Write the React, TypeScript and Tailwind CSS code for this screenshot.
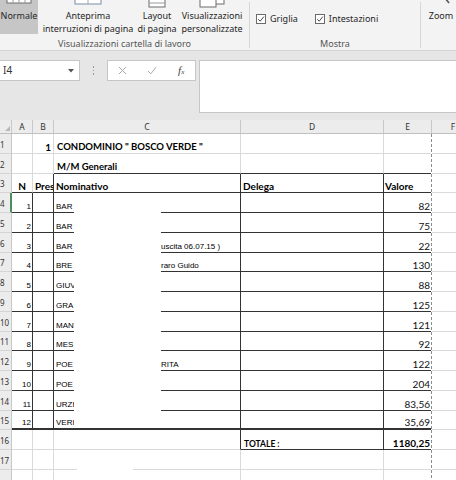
import React from "react";

const RB: Record<string, string> = {
  l: "border-r border-r-[#dadada]",
  d: "border-r border-r-[#333333]",
  n: "",
};
const BB: Record<string, string> = {
  l: "border-b border-b-[#dadada]",
  d: "border-b border-b-[#333333]",
  D: "border-b-2 border-b-[#333333]",
  n: "",
};

function Cell({
  w,
  r = "l",
  b = "l",
  className = "",
  children,
}: {
  w: string;
  r?: string;
  b?: string;
  className?: string;
  children?: React.ReactNode;
}) {
  return (
    <div className={`${w} h-full shrink-0 flex items-end leading-none pb-[1px] overflow-hidden whitespace-nowrap ${RB[r]} ${BB[b]} ${className}`}>
      {children}
    </div>
  );
}

function Sep() {
  return <div className="w-[1px] h-full shrink-0 bg-[repeating-linear-gradient(to_bottom,#8c8c8c_0_3px,transparent_3px_5px)]" />;
}

function RowHead({ n, active = false }: { n?: number; active?: boolean }) {
  return (
    <div
      className={`w-[12px] h-full shrink-0 flex items-end pb-[4px] overflow-hidden bg-[#ececec] border-b border-b-[#d4d4d4] font-['Noto_Sans'] text-[8px] text-[#333] ${
        active ? "border-r-2 border-r-[#4f8f5f]" : "border-r border-r-[#c8c8c8]"
      }`}
    >
      <span className="leading-none">{n}</span>
    </div>
  );
}

const rows = [
  { n: 1, name: "BAR", v: "82" },
  { n: 2, name: "BAR", v: "75" },
  { n: 3, name: "BAR", v: "22", extra: "uscita 06.07.15 )" },
  { n: 4, name: "BRE", v: "130", extra: "raro Guido" },
  { n: 5, name: "GIUV", v: "88" },
  { n: 6, name: "GRA", v: "125" },
  { n: 7, name: "MANV", v: "121" },
  { n: 8, name: "MES", v: "92" },
  { n: 9, name: "POE", v: "122", extra: "RITA" },
  { n: 10, name: "POE", v: "204" },
  { n: 11, name: "URZI", v: "83,56" },
  { n: 12, name: "VERI", v: "35,69" },
];

function Ribbon() {
  return (
    <div className="flex h-[51px] shrink-0 bg-[#f3f3f3] border-b border-b-[#d4d4d4] font-['Noto_Sans'] text-[9px] text-[#262626] overflow-hidden">
      <div className="flex flex-col w-[249px] shrink-0">
        <div className="flex h-[37px] shrink-0">
          <div className="w-[38px] h-[34px] bg-[#c6c6c6] flex flex-col items-center">
            <svg width="26" height="8.5" viewBox="0 0 26 8.5" className="shrink-0">
              <rect x="1" y="-3" width="24" height="6" fill="#ffffff" stroke="#6d6d6d" strokeWidth="1" />
              <line x1="7" y1="0" x2="7" y2="3" stroke="#9a9a9a" />
              <line x1="13" y1="0" x2="13" y2="3" stroke="#9a9a9a" />
              <line x1="19" y1="0" x2="19" y2="3" stroke="#9a9a9a" />
            </svg>
            <span className="leading-[13px]">Normale</span>
          </div>
          <div className="w-[2px]" />
          <div className="w-[96px] flex flex-col items-center">
            <svg width="28" height="8.5" viewBox="0 0 28 8.5" className="shrink-0">
              <rect x="1" y="-3" width="26" height="7" fill="#ffffff" stroke="#7a8ea8" strokeWidth="1" />
              <line x1="14" y1="-3" x2="14" y2="4" stroke="#9aaac0" />
            </svg>
            <span className="leading-[13px]">Anteprima</span>
            <span className="leading-[13px] whitespace-nowrap">interruzioni di pagina</span>
          </div>
          <div className="w-[42px] flex flex-col items-center">
            <svg width="18" height="8.5" viewBox="0 0 18 8.5" className="shrink-0">
              <rect x="1" y="-3" width="16" height="10" fill="#ffffff" stroke="#6d6d6d" strokeWidth="1" />
              <line x1="1" y1="3" x2="17" y2="3" stroke="#9a9a9a" />
            </svg>
            <span className="leading-[13px]">Layout</span>
            <span className="leading-[13px] whitespace-nowrap">di pagina</span>
          </div>
          <div className="w-[68px] flex flex-col items-center">
            <svg width="28" height="8.5" viewBox="0 0 28 8.5" className="shrink-0">
              <rect x="8" y="-3" width="18" height="7" fill="#ffffff" stroke="#6d6d6d" strokeWidth="1" />
              <rect x="2" y="-1" width="16" height="8" fill="#ffffff" stroke="#6d6d6d" strokeWidth="1" />
            </svg>
            <span className="leading-[13px]">Visualizzazioni</span>
            <span className="leading-[13px]">personalizzate</span>
          </div>
        </div>
        <div className="h-[13px] shrink-0 leading-[13px] text-center text-[#555] whitespace-nowrap">Visualizzazioni cartella di lavoro</div>
      </div>
      <div className="w-[1px] bg-[#d6d6d6] my-[2px] shrink-0" />
      <div className="flex flex-col w-[170px] shrink-0">
        <div className="h-[37px] shrink-0 flex items-start pt-[13px] pl-[6px]">
          <div className="flex items-center">
            <div className="w-[10px] h-[10px] border border-[#6b6b6b] bg-white flex items-center justify-center">
              <svg width="8" height="8" viewBox="0 0 8 8">
                <path d="M1.2 4.2 L3.2 6.2 L6.9 1.6" fill="none" stroke="#333" strokeWidth="0.9" />
              </svg>
            </div>
            <span className="ml-[4px] leading-[12px]">Griglia</span>
          </div>
          <div className="flex items-center ml-[17px]">
            <div className="w-[10px] h-[10px] border border-[#6b6b6b] bg-white flex items-center justify-center">
              <svg width="8" height="8" viewBox="0 0 8 8">
                <path d="M1.2 4.2 L3.2 6.2 L6.9 1.6" fill="none" stroke="#333" strokeWidth="0.9" />
              </svg>
            </div>
            <span className="ml-[4px] leading-[12px]">Intestazioni</span>
          </div>
        </div>
        <div className="h-[13px] shrink-0 leading-[13px] text-center text-[#555]">Mostra</div>
      </div>
      <div className="w-[1px] bg-[#d6d6d6] my-[2px] shrink-0" />
      <div className="flex flex-col items-center w-[40px] shrink-0">
        <svg width="20" height="8.5" viewBox="0 0 20 8.5" className="shrink-0">
          <line x1="14" y1="-2" x2="18" y2="3" stroke="#555" strokeWidth="1.6" />
        </svg>
        <span className="leading-[13px]">Zoom</span>
      </div>
    </div>
  );
}

function FormulaBar() {
  return (
    <div className="shrink-0 bg-[#e6e6e6] pt-[9px] pb-[7px] flex items-start font-['Noto_Sans'] text-[10px] text-[#333]">
      <div className="w-[80px] h-[21px] shrink-0 bg-white border border-[#c6c6c6] border-l-0 flex items-center pl-[3px] pr-[5px] justify-between">
        <span>I4</span>
        <svg width="6" height="4" viewBox="0 0 6 4">
          <path d="M0 0 L6 0 L3 3.5 Z" fill="#555" />
        </svg>
      </div>
      <div className="w-[27px] h-[21px] shrink-0 flex flex-col items-center justify-center gap-[2px]">
        <div className="w-[1.5px] h-[1.5px] bg-[#9a9a9a]" />
        <div className="w-[1.5px] h-[1.5px] bg-[#9a9a9a]" />
        <div className="w-[1.5px] h-[1.5px] bg-[#9a9a9a]" />
      </div>
      <div className="w-[89px] h-[21px] shrink-0 bg-white border border-[#c6c6c6] flex items-center">
        <div className="w-[30px] flex justify-center">
          <svg width="9" height="9" viewBox="0 0 9 9">
            <path d="M1 1 L8 8 M8 1 L1 8" stroke="#a8a8a8" strokeWidth="1" />
          </svg>
        </div>
        <div className="w-[30px] flex justify-center">
          <svg width="10" height="9" viewBox="0 0 10 9">
            <path d="M1 5 L3.8 7.8 L9 1.2" fill="none" stroke="#a8a8a8" strokeWidth="1" />
          </svg>
        </div>
        <div className="w-[28px] flex justify-center">
          <span className="font-['Liberation_Serif'] italic text-[11px] text-[#444] leading-none">
            f<span className="text-[7px]">x</span>
          </span>
        </div>
      </div>
      <div className="ml-[3px] flex-1 h-[53px] bg-white border border-[#c6c6c6] border-r-0" />
    </div>
  );
}

function ColHead({ w, label, last = false }: { w: string; label: string; last?: boolean }) {
  return (
    <div className={`${w} h-full shrink-0 flex items-center justify-center pt-[2px] ${last ? "" : "border-r border-r-[#c8c8c8]"}`}>
      {label}
    </div>
  );
}

export default function App() {
  const rowCls = "flex h-[19.75px] shrink-0";
  const cellFont = "font-['Lato'] text-[10px] text-black";
  const smallFont = "font-['Liberation_Sans'] text-[8px] text-black";
  return (
    <div className="w-[456px] h-[480px] overflow-hidden bg-white flex flex-col">
      <Ribbon />
      <FormulaBar />
      {/* column headers */}
      <div className="flex h-[14px] shrink-0 bg-[#ececec] border-b border-b-[#c0c0c0] font-['Noto_Sans'] text-[8.5px] leading-none text-[#333]">
        <div className="w-[12px] h-full shrink-0 border-r border-r-[#c8c8c8] flex items-end justify-end pr-[1px] pb-[2px]">
          <svg width="5" height="5" viewBox="0 0 5 5">
            <path d="M5 0 L5 5 L0 5 Z" fill="#b8b8b8" />
          </svg>
        </div>
        <ColHead w="w-[21px]" label="A" />
        <ColHead w="w-[21px]" label="B" />
        <ColHead w="w-[187px]" label="C" />
        <ColHead w="w-[143px]" label="D" />
        <ColHead w="w-[48px]" label="E" />
        <ColHead w="w-[42px]" label="F" last />
      </div>

      {/* sheet */}
      <div className={`flex flex-col shrink-0 ${cellFont}`}>
        {/* row 1 */}
        <div className={rowCls}>
          <RowHead n={1} />
          <Cell w="w-[21px]" />
          <Cell w="w-[21px]" className="justify-end pr-[2px] font-bold">1</Cell>
          <Cell w="w-[187px]" className="pl-[3px] font-bold text-[9.5px]">CONDOMINIO " BOSCO VERDE "</Cell>
          <Cell w="w-[143px]" />
          <Cell w="w-[47px]" r="n" />
          <Sep />
          <Cell w="w-[24px]" r="n" />
        </div>
        {/* row 2 */}
        <div className={rowCls}>
          <RowHead n={2} />
          <Cell w="w-[21px]" />
          <Cell w="w-[21px]" />
          <Cell w="w-[187px]" b="d" className="pl-[3px] font-bold text-[9.5px]">M/M Generali</Cell>
          <Cell w="w-[143px]" b="d" />
          <Cell w="w-[47px]" r="n" b="d" />
          <Sep />
          <Cell w="w-[24px]" r="n" />
        </div>
        {/* row 3 */}
        <div className={rowCls}>
          <RowHead n={3} />
          <Cell w="w-[21px]" b="d" className="justify-center font-bold">N</Cell>
          <Cell w="w-[21px]" r="d" b="d" className="pl-[2px] font-bold">Pres</Cell>
          <Cell w="w-[187px]" r="d" b="d" className="pl-[2px] font-bold">Nominativo</Cell>
          <Cell w="w-[143px]" r="d" b="d" className="pl-[2px] font-bold">Delega</Cell>
          <Cell w="w-[47px]" r="n" b="d" className="pl-[1px] font-bold">Valore</Cell>
          <Sep />
          <Cell w="w-[24px]" r="n" />
        </div>
        {/* rows 4-15 */}
        {rows.map((row, i) => {
          const last = i === rows.length - 1;
          const b = last ? "D" : "d";
          return (
            <div className={rowCls} key={row.n}>
              <RowHead n={row.n + 3} active={i === 0} />
              <Cell w="w-[21px]" r="d" b={b} className={`justify-end pr-[1px] ${smallFont} text-[7px]`}>
                {row.n}
              </Cell>
              <Cell w="w-[21px]" r="d" b={b} />
              {last ? (
                <Cell w="w-[187px]" r="d" b="D" className={`pl-[2px] ${smallFont}`}>
                  <span className="w-[18px] overflow-hidden">{row.name}</span>
                </Cell>
              ) : (
                <div className="w-[187px] h-full shrink-0 flex border-r border-r-[#333333]">
                  <div className={`w-[20px] h-full shrink-0 border-b border-b-[#333333] flex items-end leading-none pb-[1px] pl-[2px] overflow-hidden whitespace-nowrap ${smallFont}`}>
                    {row.name}
                  </div>
                  <div className="w-[87px] h-full shrink-0" />
                  <div className={`flex-1 h-full border-b border-b-[#333333] flex items-end leading-none pb-[1px] overflow-hidden whitespace-nowrap ${smallFont}`}>
                    {row.extra}
                  </div>
                </div>
              )}
              <Cell w="w-[143px]" r="d" b={b} />
              <Cell w="w-[47px]" r="n" b={b} className="justify-end pr-[1px] text-[#111]">
                {row.v}
              </Cell>
              <Sep />
              <Cell w="w-[24px]" r="n" />
            </div>
          );
        })}
        {/* row 16 */}
        <div className={rowCls}>
          <RowHead n={16} />
          <Cell w="w-[21px]" />
          <Cell w="w-[21px]" />
          <Cell w="w-[187px]" r="d" />
          <Cell w="w-[143px]" r="d" b="d" className="pl-[3px] font-bold text-[8.5px]">TOTALE :</Cell>
          <Cell w="w-[47px]" r="n" b="d" className="justify-end pr-[1px] font-bold">1180,25</Cell>
          <Sep />
          <Cell w="w-[24px]" r="n" />
        </div>
        {/* row 17 */}
        <div className={rowCls}>
          <RowHead n={17} />
          <Cell w="w-[21px]" />
          <Cell w="w-[21px]" />
          <div className="w-[187px] h-full shrink-0 flex border-r border-r-[#dadada]">
            <div className="w-[23px] h-full shrink-0 border-b border-b-[#dadada]" />
            <div className="w-[56px] h-full shrink-0" />
            <div className="flex-1 h-full border-b border-b-[#dadada]" />
          </div>
          <Cell w="w-[143px]" />
          <Cell w="w-[47px]" r="n" />
          <Sep />
          <Cell w="w-[24px]" r="n" />
        </div>
        {/* row 18 (only its top edge is visible) */}
        <div className={rowCls}>
          <RowHead />
          <Cell w="w-[21px]" />
          <Cell w="w-[21px]" />
          <Cell w="w-[187px]" />
          <Cell w="w-[143px]" />
          <Cell w="w-[47px]" r="n" />
          <Sep />
          <Cell w="w-[24px]" r="n" />
        </div>
      </div>
    </div>
  );
}
